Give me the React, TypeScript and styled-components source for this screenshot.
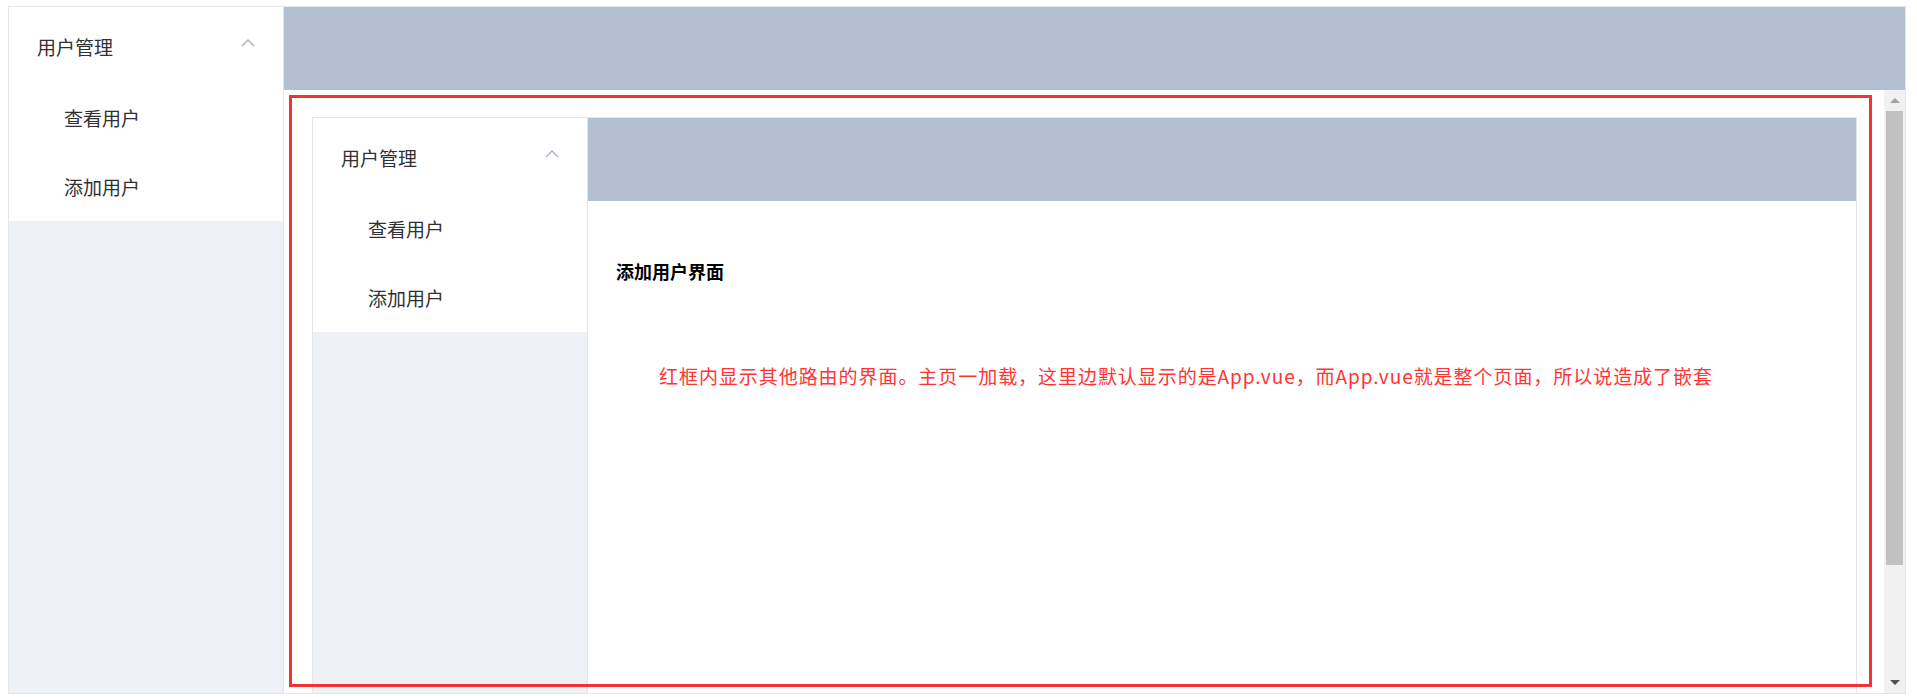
import { createGlobalStyle, styled } from 'styled-components';

const GlobalStyle = createGlobalStyle`
  html, body {
    margin: 0;
    padding: 0;
    background: #fff;
  }
  body {
    font-family: "Noto Sans CJK SC", "Noto Sans", "Liberation Sans", sans-serif;
  }
`;

const Page = styled.div`
  padding: 6px 11px 3px 8px;
`;

const Layout = styled.div<{ $nested?: boolean }>`
  display: flex;
  box-sizing: border-box;
  border: 1px solid #e6e6e6;
  height: ${p => (p.$nested ? '760px' : '688px')};
  background: #fff;
`;

const Aside = styled.aside`
  width: 275px;
  flex: none;
  box-sizing: border-box;
  background: #eef1f6;
  border-right: 1px solid #e6e6e6;
`;

const Menu = styled.ul`
  list-style: none;
  margin: 0;
  padding: 0;
  background: #fff;
`;

const SubmenuTitle = styled.li`
  height: 76px;
  display: flex;
  align-items: center;
  justify-content: space-between;
  padding: 2px 28px 0 28px;
  box-sizing: border-box;
  font-size: 19px;
  color: #303133;
`;

const MenuItem = styled.li`
  height: 69px;
  display: flex;
  align-items: center;
  padding: 0 0 0 55px;
  font-size: 19px;
  color: #303133;
`;

const Arrow = styled.svg`
  width: 14px;
  height: 8px;
  margin-top: -6px;
`;

const Section = styled.section`
  flex: 1;
  min-width: 0;
  display: flex;
  flex-direction: column;
`;

const Header = styled.header`
  height: 83px;
  flex: none;
  background: #b3c0d1;
`;

const BodyRow = styled.div`
  flex: 1;
  min-height: 0;
  display: flex;
`;

const Content = styled.div`
  position: relative;
  flex: 1;
  min-width: 0;
  overflow: hidden;
  padding: 27px 27px 0 28px;
  background: #fff;
`;

const RedFrame = styled.div`
  position: absolute;
  top: 5px;
  left: 5px;
  width: 1583px;
  height: 592px;
  box-sizing: border-box;
  border: 3px solid #f33333;
  pointer-events: none;
`;

const Scrollbar = styled.div`
  width: 21px;
  flex: none;
  display: flex;
  flex-direction: column;
  background: #f1f1f1;
`;

const ScrollButton = styled.div<{ $down?: boolean; $active?: boolean }>`
  height: 21px;
  flex: none;
  display: flex;
  align-items: center;
  justify-content: center;

  &::before {
    content: '';
    width: 0;
    height: 0;
    border-left: 5px solid transparent;
    border-right: 5px solid transparent;
    ${p =>
      p.$down
        ? `border-top: 5px solid ${p.$active ? '#505050' : '#a3a3a3'};`
        : `border-bottom: 5px solid ${p.$active ? '#505050' : '#a3a3a3'};`}
  }
`;

const Track = styled.div`
  flex: 1;
  padding: 0 2px;
`;

const Thumb = styled.div`
  background: #c1c1c1;
`;

const Main = styled.main`
  flex: 1;
  padding: 58px 28px 0 28px;
  background: #fff;
`;

const Title = styled.h3`
  margin: 0;
  font-size: 18px;
  line-height: 24px;
  font-weight: bold;
  color: #000;
`;

const Note = styled.p`
  margin: 80px 0 0 43px;
  font-size: 19px;
  line-height: 26px;
  letter-spacing: 0.95px;
  color: #ff3535;
  white-space: nowrap;
`;

function SideMenu() {
  return (
    <Aside>
      <Menu>
        <SubmenuTitle>
          <span>用户管理</span>
          <Arrow viewBox="0 0 14 8">
            <polyline points="1,7 7,1 13,7" fill="none" stroke="#a8b0bd" strokeWidth="1.3" />
          </Arrow>
        </SubmenuTitle>
        <MenuItem>查看用户</MenuItem>
        <MenuItem>添加用户</MenuItem>
      </Menu>
    </Aside>
  );
}

function NestedPage() {
  return (
    <Layout $nested>
      <SideMenu />
      <Section>
        <Header />
        <Main>
          <Title>添加用户界面</Title>
          <Note>
            红框内显示其他路由的界面。主页一加载，这里边默认显示的是App.vue，而App.vue就是整个页面，所以说造成了嵌套
          </Note>
        </Main>
      </Section>
    </Layout>
  );
}

export default function App() {
  const thumbHeight = 454;
  return (
    <Page>
      <GlobalStyle />
      <Layout>
        <SideMenu />
        <Section>
          <Header />
          <BodyRow>
            <Content>
              <NestedPage />
              <RedFrame />
            </Content>
            <Scrollbar>
              <ScrollButton />
              <Track>
                <Thumb style={{ height: thumbHeight }} />
              </Track>
              <ScrollButton $down $active />
            </Scrollbar>
          </BodyRow>
        </Section>
      </Layout>
    </Page>
  );
}
